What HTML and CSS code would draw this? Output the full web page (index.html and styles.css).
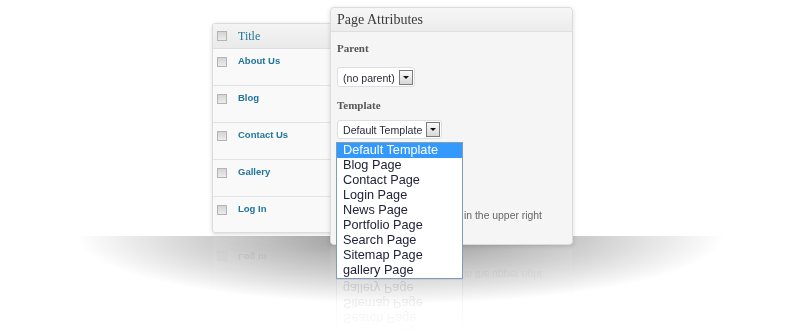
FILE: index.html
```html
<!DOCTYPE html>
<html lang="en">
<head>
  <meta charset="UTF-8">
  <title>Page Attributes</title>
  <link rel="stylesheet" href="styles.css">
</head>
<body>

  <div class="stage">
    <div class="floor-shadow"></div>

    <!-- pages list, sits behind the attributes box -->
    <div class="list-box">
      <div class="list-head">
        <span class="check"></span>
        <span class="head-title">Title</span>
      </div>
      <div class="list-row"><span class="check"></span><a class="row-title">About Us</a></div>
      <div class="list-row"><span class="check"></span><a class="row-title">Blog</a></div>
      <div class="list-row"><span class="check"></span><a class="row-title">Contact Us</a></div>
      <div class="list-row"><span class="check"></span><a class="row-title">Gallery</a></div>
      <div class="list-row"><span class="check"></span><a class="row-title">Log In</a></div>
    </div>

    <div class="attr-box">
      <div class="attr-head">Page Attributes</div>
      <div class="attr-body">
        <p class="attr-label">Parent</p>
        <div class="fake-select parent-select">
          <span>(no parent)</span>
          <span class="arrow"></span>
        </div>
        <p class="attr-label">Template</p>
        <div class="fake-select template-select">
          <span>Default Template</span>
          <span class="arrow"></span>
        </div>
        <p class="help">in the upper right</p>
      </div>
    </div>

    <!-- opened template list -->
    <ul class="drop-list">
      <li class="selected">Default Template</li>
      <li>Blog Page</li>
      <li>Contact Page</li>
      <li>Login Page</li>
      <li>News Page</li>
      <li>Portfolio Page</li>
      <li>Search Page</li>
      <li>Sitemap Page</li>
      <li>gallery Page</li>
    </ul>
  </div>

</body>
</html>
```

FILE: styles.css
```css
body {
  margin: 0;
  background-color: #fff;
  font-family: "Liberation Sans", Arial, sans-serif;
}
.stage {
  position: relative;
  width: 798px;
  height: 336px;
  overflow: hidden;
}
.floor-shadow {
  position: absolute;
  left: 60px;
  top: 236px;
  width: 680px;
  height: 100px;
  background: radial-gradient(ellipse 325px 68px at 340px 0, rgba(0,0,0,0.5), rgba(0,0,0,0.28) 40%, rgba(0,0,0,0) 100%);
}

/* pages list */
.list-box {
  position: absolute;
  left: 212px;
  top: 23px;
  width: 140px;
  height: 208px;
  overflow: hidden;
  background-color: #f9f9f9;
  border: 1px solid #dcdcdc;
  border-radius: 3px;
  box-shadow: 0 1px 4px rgba(0,0,0,0.14);
  -webkit-box-reflect: below 0 linear-gradient(transparent 70%, rgba(255,255,255,0.12));
}
.list-head {
  display: flex;
  align-items: center;
  height: 24px;
  padding-left: 4px;
  border-bottom: 1px solid #dfdfdf;
  background: linear-gradient(#f4f4f4, #eaeaea);
}
.list-row {
  display: flex;
  align-items: flex-start;
  height: 37px;
  padding: 6px 0 0 4px;
  box-sizing: border-box;
  border-bottom: 1px solid #e3e3e3;
}
.list-row:last-child {
  border-bottom: none;
}
.check {
  width: 8px;
  height: 8px;
  border: 1px solid #b4b4b4;
  background: linear-gradient(#d4d4d4, #ececec);
  margin-right: 11px;
  flex-shrink: 0;
}
.list-row .check {
  margin-top: 2px;
}
.head-title {
  font-family: "Liberation Serif", "Times New Roman", serif;
  font-size: 12px;
  color: #21759b;
}
.row-title {
  font-size: 9.5px;
  font-weight: bold;
  color: #21759b;
  line-height: 11px;
}

/* page attributes box */
.attr-box {
  position: absolute;
  left: 330px;
  top: 7px;
  width: 241px;
  height: 236px;
  background-color: #f5f5f5;
  border: 1px solid #dcdcdc;
  border-radius: 4px;
  box-shadow: 0 1px 5px rgba(0,0,0,0.14);
  -webkit-box-reflect: below 0 linear-gradient(transparent 70%, rgba(255,255,255,0.12));
}
.attr-head {
  height: 23px;
  line-height: 23px;
  padding-left: 6px;
  border-bottom: 1px solid #dfdfdf;
  border-radius: 4px 4px 0 0;
  background: linear-gradient(#f6f6f6, #ececec);
  font-family: "Liberation Serif", "Times New Roman", serif;
  font-size: 14px;
  color: #3a3a3a;
}
.attr-body {
  padding: 10px 6px 0 6px;
}
.attr-label {
  margin: 0;
  font-family: "Liberation Serif", "Times New Roman", serif;
  font-size: 11px;
  font-weight: bold;
  color: #555;
  line-height: 13px;
}
.fake-select {
  display: flex;
  align-items: center;
  gap: 4px;
  width: fit-content;
  padding: 2px 1px 1px 5px;
  background-color: #fff;
  border: 1px solid #dedede;
  border-radius: 3px;
  font-size: 10.6px;
  color: #2a2a3a;
}
.parent-select {
  margin: 12px 0 12px 0;
}
.template-select {
  margin: 8px 0 0 0;
  padding: 1px 1px 1px 5px;
}
.arrow {
  position: relative;
  width: 12px;
  height: 13px;
  border: 1px solid #7b7b7b;
  background: linear-gradient(#fafafa, #d8d8d8);
}
.arrow::after {
  content: "";
  position: absolute;
  left: 3px;
  top: 5px;
  border-left: 3px solid transparent;
  border-right: 3px solid transparent;
  border-top: 3px solid #111;
}
.help {
  margin: 71px 0 0 127px;
  font-size: 10.4px;
  line-height: 12px;
  color: #666;
}

/* open dropdown */
.drop-list {
  position: absolute;
  left: 336px;
  top: 142px;
  width: 125px;
  margin: 0;
  padding: 0;
  list-style: none;
  background-color: #fff;
  border: 1px solid #7f9db9;
  -webkit-box-reflect: below 0 linear-gradient(transparent 60%, rgba(255,255,255,0.14));
}
.drop-list li {
  height: 15px;
  line-height: 15px;
  padding-left: 6px;
  font-size: 12.7px;
  color: #22223a;
}
.drop-list li.selected {
  background-color: #3399ff;
  color: #fff;
}
```
